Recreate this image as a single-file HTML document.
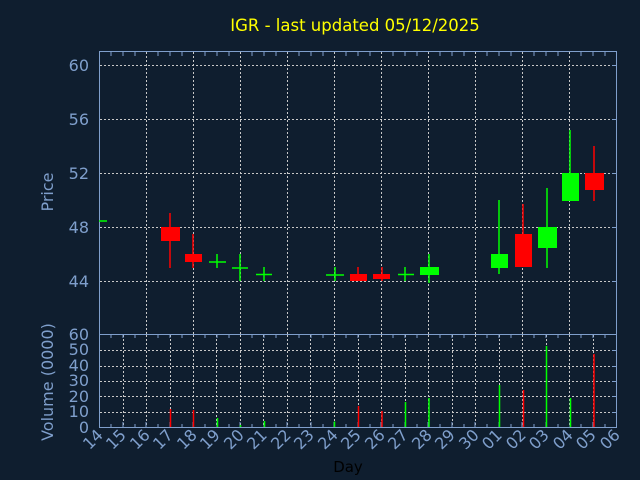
<!DOCTYPE html><html><head><style>body{margin:0;background:#0f1e2f}svg{display:block}</style></head><body>
<svg width="640" height="480" xmlns="http://www.w3.org/2000/svg" font-family="DejaVu Sans, sans-serif">
<rect width="640" height="480" fill="#0f1e2f"/>
<text x="355" y="31" fill="#ffff00" font-size="16.5" text-anchor="middle">IGR - last updated 05/12/2025</text>
<g stroke="#c8c8c8" stroke-dasharray="2,2" stroke-width="1">
<path d="M100 65.5H617M100 119.5H617M100 173.5H617M100 227.5H617M100 281.5H617"/>
<path d="M146.5 52V334M193.5 52V334M240.5 52V334M287.5 52V334M334.5 52V334M381.5 52V334M428.5 52V334M475.5 52V334M522.5 52V334M569.5 52V334"/>
<path d="M100 350.5H617M100 366.5H617M100 381.5H617M100 396.5H617M100 412.5H617"/>
<path d="M123.5 335V427M146.5 335V427M170.5 335V427M193.5 335V427M216.5 335V427M240.5 335V427M263.5 335V427M287.5 335V427M310.5 335V427M334.5 335V427M358.5 335V427M381.5 335V427M405.5 335V427M428.5 335V427M452.5 335V427M475.5 335V427M499.5 335V427M522.5 335V427M546.5 335V427M569.5 335V427M593.5 335V427"/>
</g>
<g stroke="#7f9fcc" fill="none">
<rect x="99.5" y="51.5" width="517" height="376"/>
<path d="M99.5 334.5H617"/>
<path d="M111 52v4M123 52v4M135 52v4M158 52v4M170 52v4M182 52v4M205 52v4M217 52v4M229 52v4M252 52v4M264 52v4M276 52v4M299 52v4M311 52v4M323 52v4M346 52v4M358 52v4M370 52v4M393 52v4M405 52v4M417 52v4M440 52v4M452 52v4M464 52v4M487 52v4M499 52v4M511 52v4M534 52v4M546 52v4M558 52v4M581 52v4M593 52v4M605 52v4"/>
<path d="M111 335v3M123 335v3M135 335v3M158 335v3M170 335v3M182 335v3M205 335v3M217 335v3M229 335v3M252 335v3M264 335v3M276 335v3M299 335v3M311 335v3M323 335v3M346 335v3M358 335v3M370 335v3M393 335v3M405 335v3M417 335v3M440 335v3M452 335v3M464 335v3M487 335v3M499 335v3M511 335v3M534 335v3M546 335v3M558 335v3M581 335v3M593 335v3M605 335v3"/>
<path d="M111 427v-3M123 427v-5M135 427v-3M146 427v-5M158 427v-3M170 427v-5M182 427v-3M193 427v-5M205 427v-3M217 427v-5M229 427v-3M240 427v-5M252 427v-3M264 427v-5M276 427v-3M287 427v-5M299 427v-3M311 427v-5M323 427v-3M334 427v-5M346 427v-3M358 427v-5M370 427v-3M381 427v-5M393 427v-3M405 427v-5M417 427v-3M428 427v-5M440 427v-3M452 427v-5M464 427v-3M475 427v-5M487 427v-3M499 427v-5M511 427v-3M522 427v-5M534 427v-3M546 427v-5M558 427v-3M570 427v-5M581 427v-3M593 427v-5M605 427v-3"/>
<path d="M612 65.5h5M612 119.5h5M612 173.5h5M612 227.5h5M612 281.5h5M612 350.5h5M612 366.5h5M612 381.5h5M612 396.5h5M612 412.5h5"/>
</g>
<g fill="#7f9fcc" font-size="16" text-anchor="end">
<text x="89" y="71">60</text><text x="89" y="125">56</text><text x="89" y="179">52</text><text x="89" y="233">48</text><text x="89" y="287">44</text>
<text x="89" y="340">60</text><text x="89" y="355">50</text><text x="89" y="371">40</text><text x="89" y="386">30</text><text x="89" y="402">20</text><text x="89" y="417">10</text><text x="89" y="433">0</text>
<text transform="translate(53,192) rotate(-90)" text-anchor="middle" font-size="16">Price</text>
<text transform="translate(53,382) rotate(-90)" text-anchor="middle" font-size="16">Volume (0000)</text>
</g>
<g fill="#7f9fcc" font-size="16" text-anchor="end">
<text transform="translate(104,436) rotate(-45)">14</text>
<text transform="translate(127,436) rotate(-45)">15</text>
<text transform="translate(151,436) rotate(-45)">16</text>
<text transform="translate(174,436) rotate(-45)">17</text>
<text transform="translate(198,436) rotate(-45)">18</text>
<text transform="translate(221,436) rotate(-45)">19</text>
<text transform="translate(245,436) rotate(-45)">20</text>
<text transform="translate(268,436) rotate(-45)">21</text>
<text transform="translate(292,436) rotate(-45)">22</text>
<text transform="translate(315,436) rotate(-45)">23</text>
<text transform="translate(339,436) rotate(-45)">24</text>
<text transform="translate(362,436) rotate(-45)">25</text>
<text transform="translate(386,436) rotate(-45)">26</text>
<text transform="translate(409,436) rotate(-45)">27</text>
<text transform="translate(433,436) rotate(-45)">28</text>
<text transform="translate(456,436) rotate(-45)">29</text>
<text transform="translate(480,436) rotate(-45)">30</text>
<text transform="translate(503,436) rotate(-45)">01</text>
<text transform="translate(527,436) rotate(-45)">02</text>
<text transform="translate(550,436) rotate(-45)">03</text>
<text transform="translate(574,436) rotate(-45)">04</text>
<text transform="translate(597,436) rotate(-45)">05</text>
<text transform="translate(621,436) rotate(-45)">06</text>
</g>
<text x="348" y="472" fill="#000" font-size="15" text-anchor="middle">Day</text>
<g stroke="#00ff00" stroke-width="1.5">
<path d="M99 221H107M217 254V268M209 262H226M240 254V281M232 268H248M264 267V281M256 274.5H272M335 267V281M326 275H344M405 267V281M398 274.5H414M429 254V283M499 200V274M547 188V268M570 130V173"/>
<path d="M217.5 418V427M240.5 425V427M264.5 421V427M334.5 421.5V427M405.5 402V427M429 398V427M499.5 385V427M546.5 346V427M570.5 398V427"/>
</g>
<g fill="#00ff00"><rect x="420" y="267" width="19" height="8"/><rect x="491" y="254" width="17" height="14"/><rect x="538" y="227" width="19" height="21"/><rect x="562" y="173" width="17" height="28"/></g>
<g stroke="#ff0000" stroke-width="1.5">
<path d="M170 213V268M193 234V268M358 267V281M382 267V281M523 204V267M594 146V201"/>
<path d="M170.5 409V427M193.5 410V427M358.5 406V427M382 411V427M523.5 390V427M594 354V427"/>
</g>
<g fill="#ff0000"><rect x="161" y="227" width="19" height="14"/><rect x="185" y="254" width="17" height="8"/><rect x="350" y="274" width="17" height="7"/><rect x="373" y="274" width="17" height="5"/><rect x="515" y="234" width="17" height="33"/><rect x="585" y="173" width="19" height="17"/></g>
</svg>
</body></html>
